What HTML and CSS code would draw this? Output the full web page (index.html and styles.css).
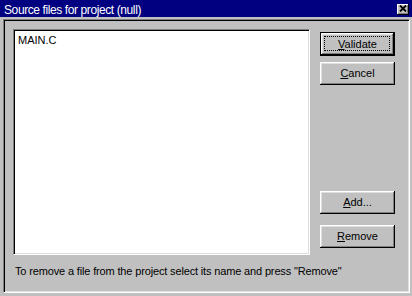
FILE: index.html
```html
<!doctype html>
<html>
<head>
<meta charset="utf-8">
<title>Source files for project (null)</title>
<link rel="stylesheet" href="styles.css">
</head>
<body>
<div id="dialog">
    <div id="titlebar">
        <span id="title">Source files for project (null)</span>
        <div id="close">
            <svg width="8" height="7" viewBox="0 0 8 7"><path d="M1 0.5 L7 6.5 M7 0.5 L1 6.5" stroke="#000" stroke-width="1.8" fill="none"/></svg>
        </div>
    </div>
    <div id="client">
        <div id="main">
            <div id="file_list">
                <div class="item">MAIN.C</div>
            </div>
            <div id="buttons">
                <button class="btn default"><u>V</u>alidate</button>
                <button class="btn" id="cancel"><u>C</u>ancel</button>
                <button class="btn" id="add"><u>A</u>dd...</button>
                <button class="btn" id="remove"><u>R</u>emove</button>
            </div>
        </div>
        <p id="hint">To remove a file from the project select its name and press "Remove"</p>
    </div>
</div>
</body>
</html>
```

FILE: styles.css
```css
body {
    margin: 0;
    background-color: #c0c0c0;
    font-family: "Liberation Sans", Arial, sans-serif;
    font-size: 11px;
    color: #000;
}

#titlebar {
    height: 17px;
    background-color: #000080;
    color: #fff;
    display: flex;
    align-items: center;
    padding: 0 3px 0 4px;
}
#title {
    flex: 1;
    font-size: 12px;
    letter-spacing: -0.4px;
    padding-top: 2px;
}
#close {
    width: 12px;
    height: 11px;
    margin-top: 1px;
    background-color: #c0c0c0;
    box-shadow: inset -1px -1px #000, inset 1px 1px #fff, inset -2px -2px #808080;
    display: flex;
    align-items: center;
    justify-content: center;
}
#close svg {
    display: block;
    margin: -1px 0 0 -1px;
}

#client {
    box-sizing: border-box;
    width: 407px;
    height: 274px;
    margin: 2px 2px 3px 3px;
    padding: 9px 0 0 9px;
    border: 1px solid;
    border-color: #808080 #fff #fff #808080;
    box-shadow: inset 1px 1px #000, inset -1px -1px #dfdfdf;
}

#main {
    display: flex;
    gap: 10px;
}

#file_list {
    box-sizing: border-box;
    width: 297px;
    height: 226px;
    background-color: #fff;
    border: 1px solid;
    border-color: #808080 #fff #fff #808080;
    box-shadow: inset 1px 1px #000, inset -1px -1px #dfdfdf;
    padding: 4px 4px;
}
.item {
    line-height: 13px;
}

#buttons {
    display: flex;
    flex-direction: column;
    width: 75px;
    padding: 3px 0 7px 0;
    box-sizing: border-box;
}

.btn {
    position: relative;
    height: 23px;
    padding: 0 0 1px 0;
    border: none;
    background-color: #c0c0c0;
    font-family: "Liberation Sans", Arial, sans-serif;
    font-size: 11px;
    color: #000;
    box-shadow: inset -1px -1px #000, inset 1px 1px #fff, inset -2px -2px #808080, inset 2px 2px #dfdfdf;
}
.btn.default {
    height: 24px;
    border: 1px solid #000;
}
.btn.default::after {
    content: "";
    position: absolute;
    top: 3px;
    left: 3px;
    right: 4px;
    bottom: 4px;
    border: 1px dotted #000;
}
#cancel {
    margin-top: 6px;
}
#add {
    margin-top: auto;
}
#remove {
    margin-top: 11px;
}

#hint {
    margin: 10px 0 0 2px;
    line-height: 13px;
    letter-spacing: -0.15px;
}
```
